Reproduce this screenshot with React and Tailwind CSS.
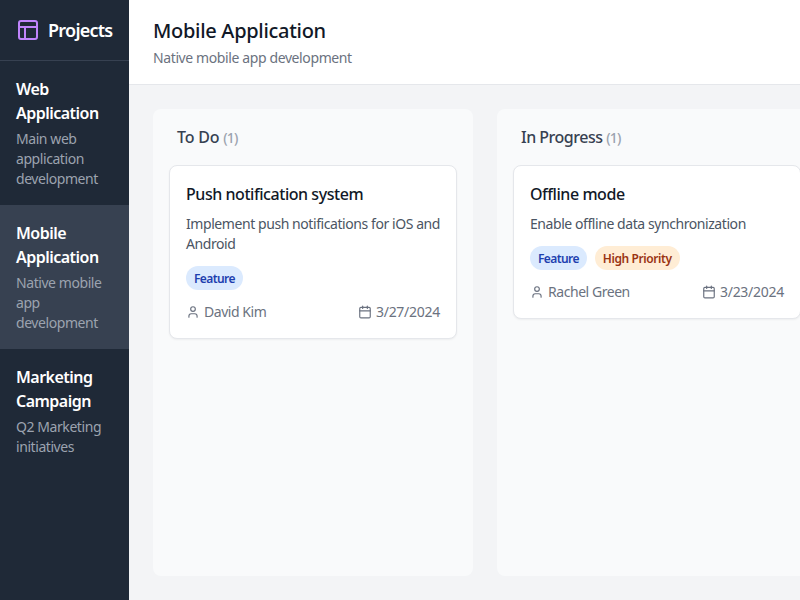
import React from "react";
import { Layout, User, Calendar } from "lucide-react";

const projects = [
  { name: "Web Application", description: "Main web application development" },
  { name: "Mobile Application", description: "Native mobile app development", active: true },
  { name: "Marketing Campaign", description: "Q2 Marketing initiatives" },
];

const columns = [
  {
    title: "To Do",
    spacing: "tracking-[-0.2px]",
    tasks: [
      {
        title: "Push notification system",
        description: "Implement push notifications for iOS and Android",
        labels: [{ text: "Feature", tone: "bg-[#dbeafe] text-[#1e40af] tracking-[-0.6px]" }],
        assignee: "David Kim",
        due: "3/27/2024",
      },
    ],
  },
  {
    title: "In Progress",
    spacing: "tracking-[-0.5px]",
    tasks: [
      {
        title: "Offline mode",
        description: "Enable offline data synchronization",
        labels: [
          { text: "Feature", tone: "bg-[#dbeafe] text-[#1e40af] tracking-[-0.6px]" },
          { text: "High Priority", tone: "bg-[#ffedd5] text-[#9a3412] tracking-[-0.42px]" },
        ],
        assignee: "Rachel Green",
        due: "3/23/2024",
      },
    ],
  },
];

function TaskCard({ task }) {
  return (
    <div className="rounded-lg border border-[#e5e7eb] bg-white p-4 shadow-xs">
      <h4 className="mb-2 leading-6 font-medium tracking-[-0.45px] text-[#111827]">{task.title}</h4>
      <p className="mb-3 text-sm tracking-[-0.43px] text-[#4b5563]">{task.description}</p>
      <div className="mb-3 flex flex-wrap gap-2">
        {task.labels.map((label) => (
          <span key={label.text} className={`rounded-full px-2 pt-[5px] pb-[3px] text-xs font-semibold ${label.tone}`}>
            {label.text}
          </span>
        ))}
      </div>
      <div className="flex items-center justify-between text-sm text-[#6b7280]">
        <span className="flex items-center gap-1 tracking-[-0.45px]">
          <User size={14} />
          {task.assignee}
        </span>
        <span className="flex items-center gap-1 tracking-[-0.27px]">
          <Calendar size={14} />
          {task.due}
        </span>
      </div>
    </div>
  );
}

export default function App() {
  return (
    <div className="flex h-screen overflow-hidden bg-[#f3f4f6] font-['Noto_Sans',sans-serif]">
      <aside className="w-[129px] shrink-0 bg-[#1f2937] text-white">
        <div className="flex h-[61px] items-center gap-2 border-b border-[#374151] px-4">
          <Layout size={24} className="shrink-0 text-[#c084fc]" />
          <h1 className="text-lg font-semibold tracking-[-0.75px]">Projects</h1>
        </div>
        <nav>
          {projects.map((p) => (
            <div key={p.name} className={`p-4 ${p.active ? "bg-[#374151]" : ""}`}>
              <h3 className="font-semibold tracking-[-0.52px]">{p.name}</h3>
              <p className="mt-1 text-sm tracking-[-0.43px] text-[#9ca3af]">{p.description}</p>
            </div>
          ))}
        </nav>
      </aside>
      <main className="flex min-w-0 flex-1 flex-col">
        <header className="h-[85px] shrink-0 border-b border-[#e5e7eb] bg-white px-6 py-4">
          <h2 className="pt-px text-xl font-medium tracking-[-0.3px] text-[#111827]">Mobile Application</h2>
          <p className="mt-[3px] text-sm tracking-[-0.39px] text-[#6b7280]">Native mobile app development</p>
        </header>
        <div className="flex min-h-0 flex-1 gap-6 overflow-hidden p-6">
          {columns.map((c) => (
            <section key={c.title} className="w-80 shrink-0 rounded-lg bg-[#f9fafb] p-4">
              <h3 className={`mb-4 px-2 font-medium text-[#374151] ${c.spacing}`}>
                {c.title} <span className="text-sm tracking-[-0.8px] text-[#9ca3af]">({c.tasks.length})</span>
              </h3>
              {c.tasks.map((t) => (
                <TaskCard key={t.title} task={t} />
              ))}
            </section>
          ))}
        </div>
      </main>
    </div>
  );
}
